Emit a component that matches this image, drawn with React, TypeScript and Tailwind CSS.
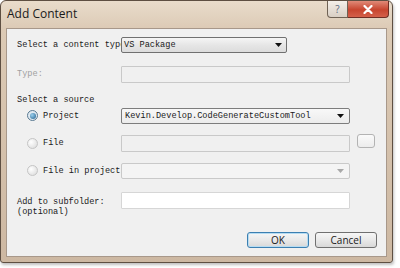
import React from "react";

const mono = { fontFamily: '"Liberation Mono", "DejaVu Sans Mono", monospace' };
const sans = { fontFamily: '"Segoe UI", "Open Sans", "Liberation Sans", sans-serif' };

const Arrow = ({ color = "#111" }: { color?: string }) => (
	<svg width="7" height="4" viewBox="0 0 7 4" className="shrink-0">
		<path d="M0 0 L7 0 L3.5 4 Z" fill={color} />
	</svg>
);

const Radio = ({ checked }: { checked?: boolean }) =>
	checked ? (
		<div className="w-[11px] h-[11px] rounded-full border border-[#5a7a92] bg-[#dfe9f1] flex items-center justify-center shrink-0">
			<div className="w-[6px] h-[6px] rounded-full bg-[radial-gradient(circle_at_35%_35%,#9bd0ee,#1f5e8c)]" />
		</div>
	) : (
		<div className="w-[11px] h-[11px] rounded-full border border-[#c5c5c5] bg-[radial-gradient(circle_at_35%_35%,#ffffff,#d8d8d8)] shrink-0" />
	);

export default function App() {
	return (
		<div className="w-[400px] h-[268px] bg-white overflow-hidden">
			{/* window frame */}
			<div className="w-[393px] h-[263px] rounded-t-[6px] rounded-b-[3px] border border-[#5e4f42] bg-[linear-gradient(180deg,#e9dccb_0px,#dccab5_28px,#cdb8a2_100%)] shadow-[1px_2px_3px_rgba(0,0,0,0.25)] flex flex-col">
				{/* title bar */}
				<div className="h-[27px] flex flex-row justify-between items-start shrink-0">
					<div className="pl-[6px] pt-[4px] text-[12px] text-[#1a1a1a]" style={sans}>
						Add Content
					</div>
					<div className="flex flex-row mr-[3px]">
						<div className="w-[21px] h-[17px] border border-[#6f6254] border-t-0 rounded-bl-[4px] bg-[linear-gradient(180deg,#f4efe9,#d9cfc4)] flex items-center justify-center text-[10px] text-[#5a6b80]" style={sans}>
							?
						</div>
						<div className="w-[41px] h-[17px] border border-[#6f2e24] border-l-0 border-t-0 rounded-br-[4px] bg-[linear-gradient(180deg,#e08a78,#c7452f_55%,#d4604a)] flex items-center justify-center">
							<svg width="10" height="9" viewBox="0 0 10 9">
								<path d="M1.5 1 L8.5 8 M8.5 1 L1.5 8" stroke="#fff" strokeWidth="2.2" strokeLinecap="round" />
							</svg>
						</div>
					</div>
				</div>

				{/* client area */}
				<div className="mx-[5px] h-[229px] border border-[#a8988a] bg-[#f0f0f0] text-[8.6px] text-[#1a1a1a]" style={mono}>
					<div className="flex flex-col pl-[10px]">
						{/* content type */}
						<div className="mt-[8px] h-[16px] flex flex-row items-center">
							<div className="w-[104px] overflow-hidden whitespace-nowrap">Select a content type</div>
							<div className="w-[166px] h-[16px] border border-[#707070] rounded-[2px] bg-[linear-gradient(180deg,#f5f5f5,#e6e6e6_50%,#dcdcdc)] flex flex-row items-center justify-between pl-[2px] pr-[4px]">
								<span>VS Package</span>
								<Arrow />
							</div>
						</div>

						{/* type */}
						<div className="mt-[13px] h-[17px] flex flex-row items-center">
							<div className="w-[104px] text-[#a0a0a0]">Type:</div>
							<div className="w-[229px] h-[17px] border border-[#c9c9c9] rounded-[1px] bg-[#f0f0f0]" />
						</div>

						{/* source */}
						<div className="mt-[12px] h-[10px] leading-[10px]">Select a source</div>

						<div className="mt-[3px] h-[16px] flex flex-row items-center">
							<div className="w-[104px] flex flex-row items-center pl-[10px] gap-[5px]">
								<Radio checked />
								<span>Project</span>
							</div>
							<div className="w-[229px] h-[16px] border border-[#7d7d7d] rounded-[2px] bg-[linear-gradient(180deg,#f8f8f8,#ececec)] flex flex-row items-center justify-between pl-[3px] pr-[5px]">
								<span>Kevin.Develop.CodeGenerateCustomTool</span>
								<Arrow />
							</div>
						</div>

						<div className="mt-[11px] h-[17px] flex flex-row items-center">
							<div className="w-[104px] flex flex-row items-center pl-[10px] gap-[5px]">
								<Radio />
								<span>File</span>
							</div>
							<div className="w-[229px] h-[17px] border border-[#c9c9c9] rounded-[1px] bg-[#f0f0f0]" />
							<div className="ml-[7px] mb-[5px] w-[18px] h-[14px] border border-[#b3b3b3] rounded-[3px] bg-[linear-gradient(180deg,#fafafa,#ececec)]" />
						</div>

						<div className="mt-[11px] h-[16px] flex flex-row items-center">
							<div className="w-[104px] flex flex-row items-center pl-[10px] gap-[5px] whitespace-nowrap">
								<Radio />
								<span>File in project</span>
							</div>
							<div className="w-[229px] h-[16px] border border-[#c9c9c9] rounded-[2px] bg-[#f4f4f4] flex flex-row items-center justify-end pr-[5px]">
								<Arrow color="#a8a8a8" />
							</div>
						</div>

						{/* subfolder */}
						<div className="mt-[13px] h-[20px] flex flex-row items-start">
							<div className="w-[104px] pt-[5px] leading-[10px]">
								<div>Add to subfolder:</div>
								<div>(optional)</div>
							</div>
							<div className="w-[229px] h-[17px] border border-[#d6d6d6] rounded-[1px] bg-white" />
						</div>

						{/* buttons */}
						<div className="mt-[20px] h-[16px] flex flex-row justify-end pr-[9px] gap-[6px] text-[10px] text-[#1a1a1a]" style={sans}>
							<div className="w-[62px] h-[16px] border border-[#3c7fb1] rounded-[3px] bg-[linear-gradient(180deg,#f6f6f6,#e9e9e9_50%,#d8d8d8)] shadow-[inset_0_0_0_1px_#b6dcf2] flex items-center justify-center">
								OK
							</div>
							<div className="w-[62px] h-[16px] border border-[#707070] rounded-[3px] bg-[linear-gradient(180deg,#f6f6f6,#e9e9e9_50%,#d8d8d8)] flex items-center justify-center">
								Cancel
							</div>
						</div>
					</div>
				</div>
			</div>
		</div>
	);
}
